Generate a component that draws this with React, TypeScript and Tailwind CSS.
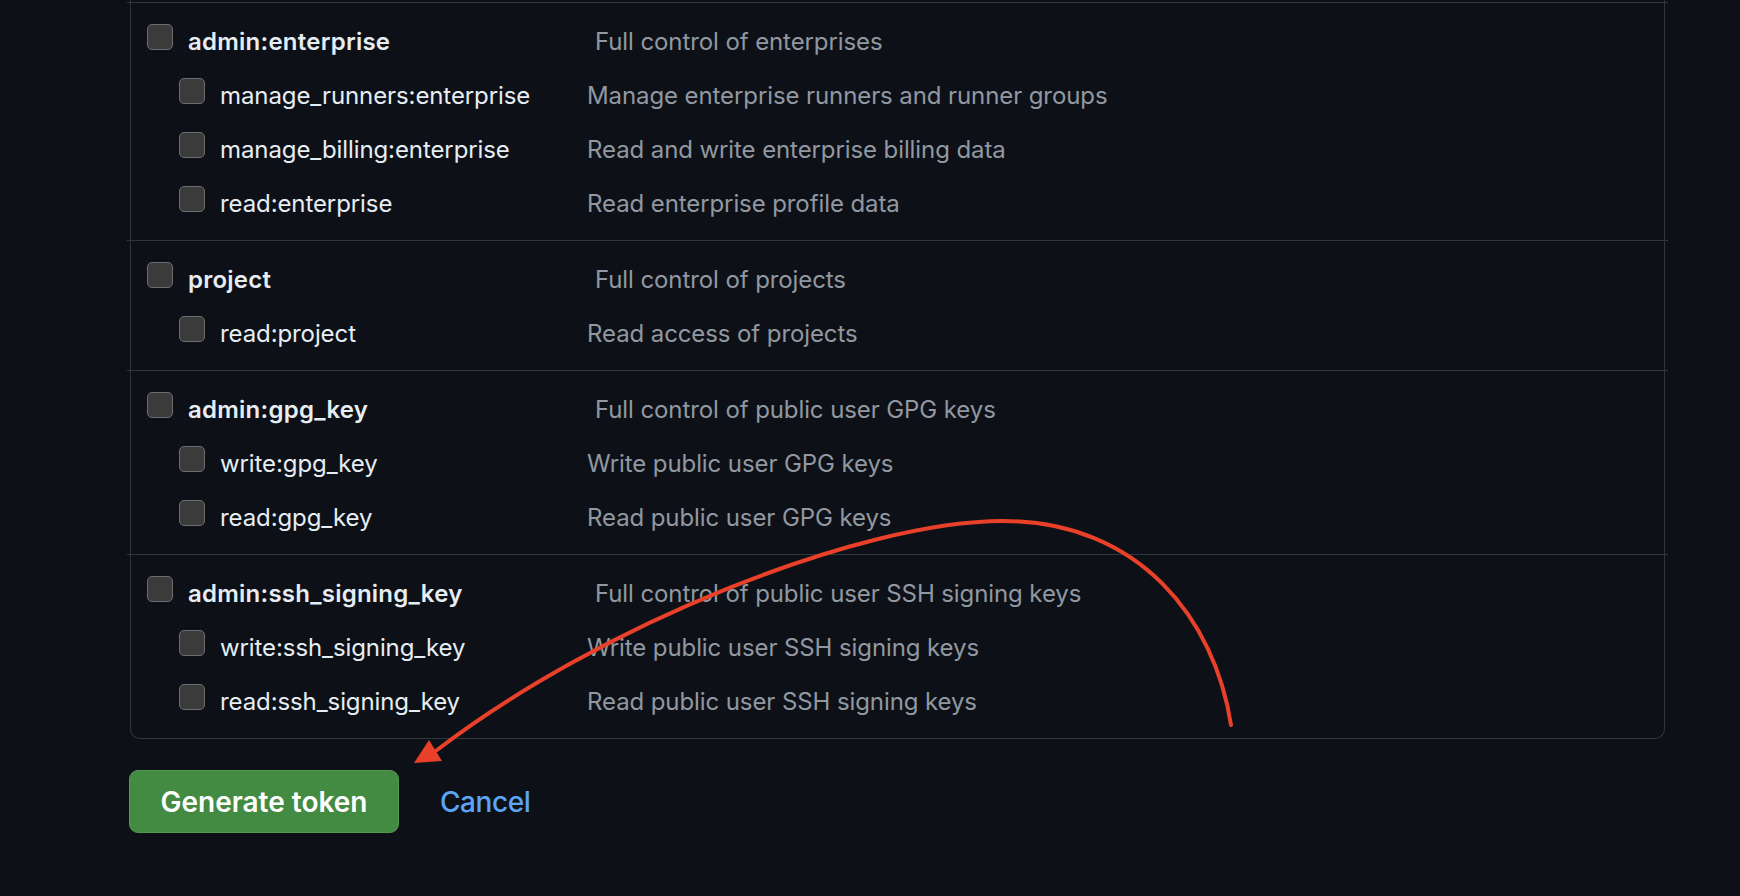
type Scope = { name: string; desc: string };
type Group = { top: Scope; subs: Scope[] };

const groups: Group[] = [
  {
    top: { name: 'admin:enterprise', desc: 'Full control of enterprises' },
    subs: [
      { name: 'manage_runners:enterprise', desc: 'Manage enterprise runners and runner groups' },
      { name: 'manage_billing:enterprise', desc: 'Read and write enterprise billing data' },
      { name: 'read:enterprise', desc: 'Read enterprise profile data' },
    ],
  },
  {
    top: { name: 'project', desc: 'Full control of projects' },
    subs: [{ name: 'read:project', desc: 'Read access of projects' }],
  },
  {
    top: { name: 'admin:gpg_key', desc: 'Full control of public user GPG keys' },
    subs: [
      { name: 'write:gpg_key', desc: 'Write public user GPG keys' },
      { name: 'read:gpg_key', desc: 'Read public user GPG keys' },
    ],
  },
  {
    top: { name: 'admin:ssh_signing_key', desc: 'Full control of public user SSH signing keys' },
    subs: [
      { name: 'write:ssh_signing_key', desc: 'Write public user SSH signing keys' },
      { name: 'read:ssh_signing_key', desc: 'Read public user SSH signing keys' },
    ],
  },
];

const Checkbox = () => (
  <span className="block w-[26px] h-[26px] shrink-0 rounded-[5px] bg-[#3b3b3c] border-[1.5px] border-[#6c6c6e]" />
);

const Divider = () => <div className="h-px bg-[#30363d] -mx-[4px]" />;

const ScopeGroup = ({ group }: { group: Group }) => {
  return (
    <div className="pt-[7px] pb-[14px]">
      <div className="flex items-center h-[54px] pl-[16px]">
        <Checkbox />
        <span className="ml-[15px] w-[407px] pt-[10px] font-semibold tracking-[0.01em] text-[#e6edf3]">
          {group.top.name}
        </span>
        <span className="pt-[10px] text-[#9198a1]">{group.top.desc}</span>
      </div>
      {group.subs.map((s) => (
        <div key={s.name} className="flex items-center h-[54px] pl-[48px]">
          <Checkbox />
          <span className="ml-[15px] w-[367px] pt-[10px] text-[#e6edf3]">{s.name}</span>
          <span className="pt-[10px] text-[#9198a1]">{s.desc}</span>
        </div>
      ))}
    </div>
  );
};

export default function App() {
  return (
    <div className="relative w-[1740px] h-[896px] overflow-hidden bg-[#0d1117] font-['Inter',sans-serif] text-[24px] leading-[30px] tracking-[-0.004em]">
      <div className="ml-[130px] w-[1535px] pt-[2px] border-x border-b border-[#30363d] rounded-b-[10px]">
        {groups.map((g) => (
          <div key={g.top.name}>
            <Divider />
            <ScopeGroup group={g} />
          </div>
        ))}
      </div>

      <div className="flex items-center mt-[31px] ml-[129px]">
        <button className="w-[270px] h-[63px] rounded-[9px] bg-[#438a42] border border-[#54994f] text-white text-[28px] font-semibold tracking-normal">
          Generate token
        </button>
        <button className="ml-[41px] text-[28px] font-medium text-[#5ba4f6] tracking-[-0.015em]">Cancel</button>
      </div>

      {/* red annotation arrow */}
      <svg className="absolute inset-0 pointer-events-none" width="1740" height="896" viewBox="0 0 1740 896">
        <path
          d="M1231 725 C 1215 620, 1140 521, 1003 521 C 860 521, 600 625, 437 750"
          fill="none"
          stroke="#e9402a"
          strokeWidth="4"
          strokeLinecap="round"
        />
        <polygon points="414,763 429,740 442,761" fill="#e9402a" />
      </svg>
    </div>
  );
}
